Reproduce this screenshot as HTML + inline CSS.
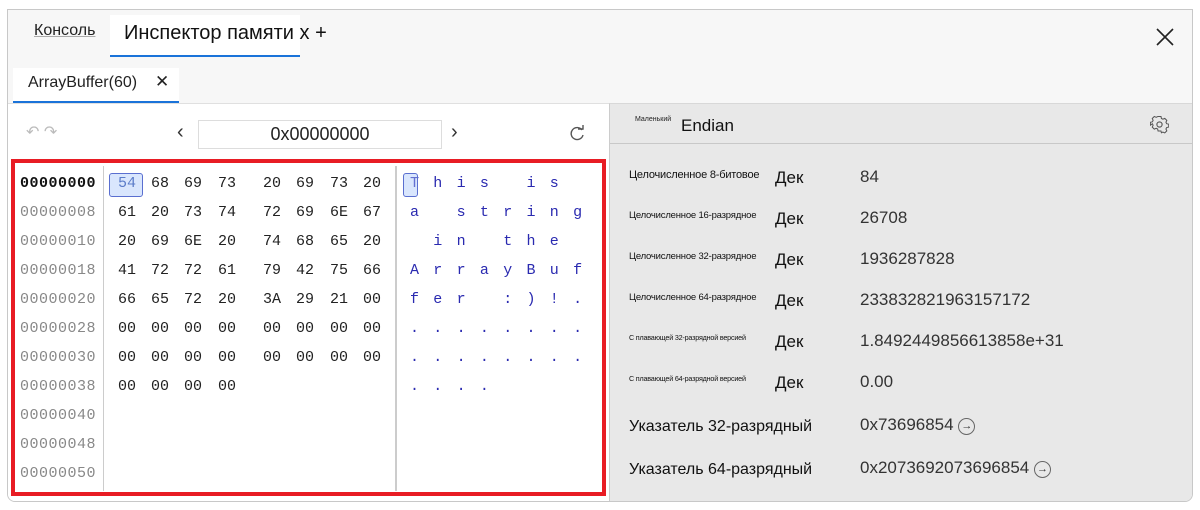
<!DOCTYPE html>
<html><head><meta charset="utf-8"><style>
*{margin:0;padding:0;box-sizing:border-box}
body{width:1200px;height:510px;background:#fff;font-family:"Liberation Sans",sans-serif;position:relative;overflow:hidden}
.frame{position:absolute;left:7px;top:9px;width:1186px;height:493px;border:1px solid #c8c8c8;border-radius:0 0 8px 8px;background:#f7f7f7;overflow:hidden}
.abs{position:absolute}
.mono{font-family:"Liberation Mono",monospace;font-size:15px}
</style></head><body>
<div class="frame">
 <div class="abs" style="left:26px;top:12px;font-size:16px;color:#222;text-decoration:underline;text-decoration-color:#aaa">Консоль</div>
 <div class="abs" style="left:102px;top:5px;width:190px;height:42px;background:#fff;border-bottom:2px solid #1a73d9"></div>
 <div class="abs" style="left:116px;top:12px;font-size:20px;color:#111">Инспектор памяти x +</div>
 <svg class="abs" style="left:1146px;top:16px" width="22" height="22"><path d="M3 3L19 19M19 3L3 19" stroke="#222" stroke-width="1.6"/></svg>
 <div class="abs" style="left:5px;top:58px;width:166px;height:35px;background:#fff;border-bottom:2px solid #1a73d9"></div>
 <div class="abs" style="left:20px;top:64px;font-size:16px;color:#222">ArrayBuffer(60)</div>
 <div class="abs" style="left:147px;top:62px;font-size:17px;color:#222">✕</div>
 <div class="abs" style="left:0;top:93px;width:601px;height:400px;background:#fff;border-top:1px solid #e0e0e0"></div>
 <div class="abs" style="left:18px;top:112px;font-size:16px;color:#bbb">↶ ↷</div>
 <div class="abs" style="left:169px;top:111px;font-size:20px;color:#333">‹</div>
 <div class="abs" style="left:190px;top:110px;width:244px;height:29px;border:1px solid #ddd;text-align:center;font-size:18px;line-height:27px;color:#222">0x00000000</div>
 <div class="abs" style="left:443px;top:111px;font-size:20px;color:#333">›</div>
 <svg class="abs" style="left:560px;top:115px" width="18" height="18"><path d="M14 5A6 6 0 1 0 15 10" fill="none" stroke="#555" stroke-width="1.4"/><path d="M10 4L15 4L15 0" fill="none" stroke="#555" stroke-width="1.4"/></svg>
 <div class="abs" style="left:95px;top:156px;width:1px;height:325px;background:#ccc"></div>
 <div class="abs" style="left:387px;top:156px;width:2px;height:325px;background:#ccc"></div>
 <div class="abs" style="left:3px;top:149px;width:595px;height:337px;border:4px solid #e81c24"></div>
 <div id="hex"></div>
 <div class="abs" style="left:601px;top:93px;width:585px;height:400px;background:#e8e8e8;border-left:1px solid #ccc;border-top:1px solid #d8d8d8"></div>
 <div class="abs" style="left:602px;top:133px;width:584px;height:1px;background:#c8c8c8"></div>
 <div class="abs" style="left:627px;top:106px;font-size:7px;color:#222">Маленький</div>
 <div class="abs" style="left:673px;top:106px;font-size:17px;color:#111">Endian</div>
 <svg class="abs" style="left:1142px;top:105px" width="19" height="19" viewBox="0 0 24 24"><path d="M10 2h4l.6 2.8 2 1 2.6-1.2 2.8 2.8-1.2 2.6 1 2 2.8.6v4l-2.8.6-1 2 1.2 2.6-2.8 2.8-2.6-1.2-2 1L14 22h-4l-.6-2.8-2-1-2.6 1.2-2.8-2.8 1.2-2.6-1-2L-.6 14v-4l2.8-.6 1-2-1.2-2.6 2.8-2.8 2.6 1.2 2-1z" transform="translate(1 0) scale(.92)" fill="none" stroke="#555" stroke-width="1.4"/><circle cx="12" cy="12" r="3.3" fill="none" stroke="#555" stroke-width="1.4"/></svg>
 <div id="vals"></div>
</div>
<script>
var rows=[["54","68","69","73","20","69","73","20"],["61","20","73","74","72","69","6E","67"],["20","69","6E","20","74","68","65","20"],["41","72","72","61","79","42","75","66"],["66","65","72","20","3A","29","21","00"],["00","00","00","00","00","00","00","00"],["00","00","00","00","00","00","00","00"],["00","00","00","00"]];
var asc=["This is ","a string"," in the ","ArrayBuf","fer :)!.","........","........","...."];
var xs=[110,143,176,210,255,288,322,355];
var h="";
for(var r=0;r<11;r++){var y=165+r*29;
 h+='<div class="abs mono" style="left:12px;top:'+y+'px;color:'+(r?'#888':'#111')+';font-weight:'+(r?'normal':'bold')+';letter-spacing:0.5px">'+("0000000"+(r*8).toString(16).toUpperCase()).slice(-8)+'</div>';
 if(rows[r]){for(var c=0;c<rows[r].length;c++){
  h+='<div class="abs mono" style="left:'+xs[c]+'px;top:'+y+'px;color:'+(r==0&&c==0?'#1a3fa0':'#222')+'">'+rows[r][c]+'</div>';
  var ch=asc[r][c];
  h+='<div class="abs mono" style="left:'+(402+c*23.3)+'px;top:'+y+'px;color:#2a2ab0">'+(ch==" "?"":ch)+'</div>';}}
}
h+='<div class="abs" style="left:101px;top:163px;width:34px;height:24px;border:1px solid #5a6fd0;border-radius:3px;background:rgba(170,200,250,.45)"></div>';
h+='<div class="abs" style="left:395px;top:163px;width:15px;height:24px;border:1px solid #5a6fd0;border-radius:3px;background:rgba(170,200,250,.45)"></div>';
document.getElementById("hex").innerHTML=h;
var v=[["Целочисленное 8-битовое","84",11],["Целочисленное 16-разрядное","26708",9.5],["Целочисленное 32-разрядное","1936287828",9.5],["Целочисленное 64-разрядное","233832821963157172",9.5],["С плавающей 32-разрядной версией","1.8492449856613858e+31",7.2],["С плавающей 64-разрядной версией","0.00",7.2]];
var g="";
for(var i=0;i<v.length;i++){var y=157+i*41;
 g+='<div class="abs" style="left:621px;top:'+(y+2)+'px;font-size:'+v[i][2]+'px;color:#111;letter-spacing:-0.2px">'+v[i][0]+'</div>';
 g+='<div class="abs" style="left:767px;top:'+(y+1)+'px;font-size:17px;color:#111">Дек</div>';
 g+='<div class="abs" style="left:852px;top:'+y+'px;font-size:17px;color:#333">'+v[i][1]+'</div>';}
g+='<div class="abs" style="left:621px;top:408px;font-size:16px;color:#111">Указатель 32-разрядный</div><div class="abs" style="left:852px;top:405px;font-size:17px;color:#333">0x73696854 <span style="display:inline-block;width:17px;height:17px;border:1px solid #666;border-radius:50%;font-size:11px;text-align:center;line-height:15px;vertical-align:1px">→</span></div>';
g+='<div class="abs" style="left:621px;top:451px;font-size:16px;color:#111">Указатель 64-разрядный</div><div class="abs" style="left:852px;top:448px;font-size:17px;color:#333">0x2073692073696854 <span style="display:inline-block;width:17px;height:17px;border:1px solid #666;border-radius:50%;font-size:11px;text-align:center;line-height:15px;vertical-align:1px">→</span></div>';
document.getElementById("vals").innerHTML=g;
</script>
</body></html>
